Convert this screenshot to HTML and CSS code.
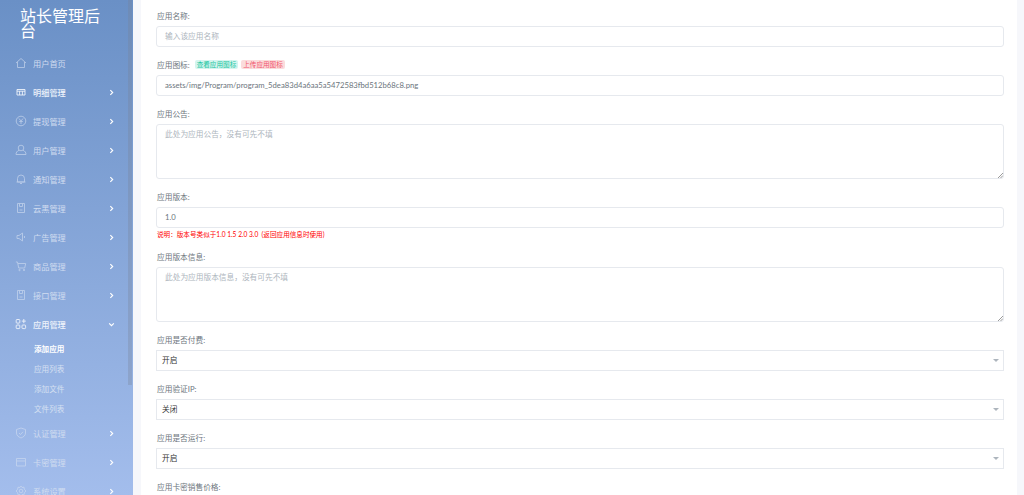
FILE: index.html
```html
<!DOCTYPE html>
<html>
<head>
<meta charset="utf-8">
<title>站长管理后台</title>
<link rel="stylesheet" href="styles.css">
</head>
<body>
<div class="wrapper">
	<div class="sidebar">
		<div class="logo">站长管理后台</div>
		<ul class="menu">
			<li class="item"><svg class="ico" viewBox="0 0 12 12"><path d="M1 6 6 1.500 11 6M2.500 5v5.500h7V5"/></svg><span class="name">用户首页</span></li>
			<li class="item bright"><svg class="ico" viewBox="0 0 12 12"><path d="M2 3.500h8v5.500h-8zM2 5.200h8M4.600 5.200v3.800M7.400 5.200v3.800"/></svg><span class="name">明细管理</span><svg class="arrow" viewBox="0 0 6 6"><path d="M2 1 4 3 2 5"/></svg></li>
			<li class="item"><svg class="ico" viewBox="0 0 12 12"><circle cx="6" cy="6" r="4.800"/><path d="M4 3.500 6 6l2-2.500M6 6v3M4.200 6.500h3.600"/></svg><span class="name">提现管理</span><svg class="arrow" viewBox="0 0 6 6"><path d="M2 1 4 3 2 5"/></svg></li>
			<li class="item"><svg class="ico" viewBox="0 0 12 12"><circle cx="6" cy="4" r="2.800"/><path d="M4 6.300C2 7 1 8.500 1 10.500h10C11 8.500 10 7 8 6.300"/></svg><span class="name">用户管理</span><svg class="arrow" viewBox="0 0 6 6"><path d="M2 1 4 3 2 5"/></svg></li>
			<li class="item"><svg class="ico" viewBox="0 0 12 12"><path d="M2.500 9V5.500a3.500 3.500 0 0 1 7 0V9zM1.500 9h9M5 10.500h2"/></svg><span class="name">通知管理</span><svg class="arrow" viewBox="0 0 6 6"><path d="M2 1 4 3 2 5"/></svg></li>
			<li class="item"><svg class="ico" viewBox="0 0 12 12"><path d="M2.500 1.500h7v9h-7zM4.500 1.500v3h3v-3M4.500 8h3"/></svg><span class="name">云黑管理</span><svg class="arrow" viewBox="0 0 6 6"><path d="M2 1 4 3 2 5"/></svg></li>
			<li class="item"><svg class="ico" viewBox="0 0 12 12"><path d="M2 4.500h2L7.500 2v8L4 7.500H2zM9.500 5v2"/></svg><span class="name">广告管理</span><svg class="arrow" viewBox="0 0 6 6"><path d="M2 1 4 3 2 5"/></svg></li>
			<li class="item"><svg class="ico" viewBox="0 0 12 12"><path d="M.8 2h1.700l1.200 6h6l1-4.500H3"/><circle cx="4.500" cy="10" r=".7"/><circle cx="9" cy="10" r=".7"/></svg><span class="name">商品管理</span><svg class="arrow" viewBox="0 0 6 6"><path d="M2 1 4 3 2 5"/></svg></li>
			<li class="item"><svg class="ico" viewBox="0 0 12 12"><path d="M2.500 1.500h7v9h-7zM4.500 1.500v3h3v-3M4.500 8h3"/></svg><span class="name">接口管理</span><svg class="arrow" viewBox="0 0 6 6"><path d="M2 1 4 3 2 5"/></svg></li>
			<li class="item bright open"><svg class="ico" viewBox="0 0 12 12"><rect x="1.200" y="1.500" width="3.600" height="3.600" rx=".8"/><rect x="1.200" y="7" width="3.600" height="3.600" rx=".8"/><rect x="7" y="7" width="3.600" height="3.600" rx=".8"/><path d="M8.800 1v4.200M6.800 3.100h4"/></svg><span class="name">应用管理</span><svg class="arrow" viewBox="0 0 6 6"><path d="M1 2 3 4 5 2"/></svg></li>
			<li class="sub now">添加应用</li>
			<li class="sub">应用列表</li>
			<li class="sub">添加文件</li>
			<li class="sub last">文件列表</li>
			<li class="item"><svg class="ico" viewBox="0 0 12 12"><path d="M6 1 10.500 2.500V6c0 2.500-2 4-4.500 5C3.500 10 1.500 8.500 1.500 6V2.500zM4 6l1.500 1.500L8 4.800"/></svg><span class="name">认证管理</span><svg class="arrow" viewBox="0 0 6 6"><path d="M2 1 4 3 2 5"/></svg></li>
			<li class="item"><svg class="ico" viewBox="0 0 12 12"><path d="M1.500 2.500h9v7.500h-9zM1.500 5h9"/></svg><span class="name">卡密管理</span><svg class="arrow" viewBox="0 0 6 6"><path d="M2 1 4 3 2 5"/></svg></li>
			<li class="item"><svg class="ico" viewBox="0 0 12 12"><circle cx="6" cy="6" r="1.800"/><path d="M6 1 7 2.500 9 2.200 9.300 4.200 11 6 9.300 7.800 9 9.800 7 9.500 6 11 5 9.500 3 9.800 2.700 7.800 1 6 2.700 4.200 3 2.200 5 2.500z"/></svg><span class="name">系统设置</span><svg class="arrow" viewBox="0 0 6 6"><path d="M2 1 4 3 2 5"/></svg></li>
		</ul>
		<div class="scrollbar"></div>
	</div>
	<div class="main">
		<div class="card">
			<div class="field">
				<label>应用名称:</label>
				<div class="input hint">输入该应用名称</div>
			</div>
			<div class="field">
				<label>应用图标: <span class="tag green">查看应用图标</span> <span class="tag red">上传应用图标</span></label>
				<div class="input">assets/img/Program/program_5dea83d4a6aa5a5472583fbd512b68c8.png</div>
			</div>
			<div class="field">
				<label>应用公告:</label>
				<div class="input area hint">此处为应用公告，没有可先不填<svg class="grip" viewBox="0 0 6 6"><path d="M1 6 6 1M3.500 6 6 3.500"/></svg></div>
			</div>
			<div class="field">
				<label>应用版本:</label>
				<div class="input">1.0</div>
				<div class="note">说明：版本号类似于1.0 1.5 2.0 3.0 &nbsp;(返回应用信息时使用)</div>
			</div>
			<div class="field">
				<label>应用版本信息:</label>
				<div class="input area hint">此处为应用版本信息，没有可先不填<svg class="grip" viewBox="0 0 6 6"><path d="M1 6 6 1M3.500 6 6 3.500"/></svg></div>
			</div>
			<div class="field">
				<label>应用是否付费:</label>
				<div class="input select">开启</div>
			</div>
			<div class="field">
				<label>应用验证IP:</label>
				<div class="input select">关闭</div>
			</div>
			<div class="field">
				<label>应用是否运行:</label>
				<div class="input select">开启</div>
			</div>
			<div class="field">
				<label>应用卡密销售价格:</label>
			</div>
		</div>
	</div>
</div>
</body>
</html>
```

FILE: styles.css
```css
html, body{
	margin: 0;
	padding: 0;
	height: 100%;
	overflow: hidden;
}
body{
	background: #f6f7fb;
	font-family: "Lato", "Noto Sans CJK SC", sans-serif;
	font-size: 7.7px;
	color: #6c757d;
}
.wrapper{
	display: flex;
	height: 495px;
	overflow: hidden;
}
.sidebar{
	position: relative;
	width: 133px;
	flex: none;
	background: linear-gradient(180deg, #6a90c6 0%, #a3bdec 100%);
	font-size: 8.2px;
	overflow: hidden;
}
.logo{
	width: 90px;
	padding: 8px 0 0 20px;
	height: 40px;
	font-size: 16px;
	line-height: 15px;
	color: #fff;
}
.menu{
	list-style: none;
	margin: 0;
	padding: 0;
}
.item{
	display: flex;
	align-items: center;
	height: 29px;
	padding-left: 15px;
	color: #d0dcf0;
}
.item.bright{
	color: #eef3fb;
	font-weight: 500;
}
.ico{
	width: 12px;
	height: 12px;
	margin-right: 6px;
	fill: none;
	stroke: currentColor;
	stroke-width: .9;
	opacity: .7;
}
.bright .ico{
	opacity: 1;
}
.name{
	flex: 1;
}
.arrow{
	width: 7px;
	height: 7px;
	margin: 1px 18px 0 0;
	fill: none;
	stroke: #fff;
	stroke-width: 1;
}
.sub{
	height: 20px;
	line-height: 20px;
	padding-left: 34px;
	font-size: 7.6px;
	color: #d5e0f2;
}
.sub.now{
	margin-top: 1px;
	color: #fff;
	font-weight: 700;
}
.sub.last{
	height: 19px;
}
.scrollbar{
	position: absolute;
	top: 0;
	right: 1px;
	width: 4px;
	height: 385px;
	background: rgba(120, 130, 150, .3);
}
.main{
	flex: 1;
	padding: 0 7px 0 8px;
	overflow: hidden;
}
.card{
	background: #fff;
	height: 100%;
	padding: 10px 13px 0 15px;
}
.field{
	margin-bottom: 12px;
}
label{
	display: flex;
	align-items: center;
	gap: 3px;
	height: 11px;
	margin-bottom: 5px;
	padding-left: 1px;
	color: #6c757d;
}
.tag{
	padding: 0 2px;
	height: 9px;
	line-height: 9px;
	border-radius: 2px;
	font-size: 6.6px;
}
.green{
	margin-left: 2px;
	background: #d4f5ef;
	color: #1bc5a0;
}
.red{
	background: #fbdcdc;
	color: #f1556c;
}
.input{
	position: relative;
	box-sizing: border-box;
	height: 21px;
	line-height: 18px;
	padding: 0 8px;
	border: 1px solid #e6e9ee;
	border-radius: 3px;
	background: #fff;
	color: #6c757d;
}
.hint{
	color: #adb5bd;
}
.area{
	height: 55px;
}
.grip{
	position: absolute;
	right: 0;
	bottom: 0;
	width: 6px;
	height: 6px;
	fill: none;
	stroke: #555;
	stroke-width: .6;
}
.select{
	padding-left: 5px;
	border-radius: 0;
	color: #333;
}
.select::after{
	content: "";
	position: absolute;
	right: 4px;
	top: 8px;
	border-left: 3px solid transparent;
	border-right: 3px solid transparent;
	border-top: 3px solid #adb5bd;
}
.note{
	margin-top: 1px;
	height: 10px;
	line-height: 10px;
	padding-left: 1px;
	font-size: 6.6px;
	color: #f00;
}
```
